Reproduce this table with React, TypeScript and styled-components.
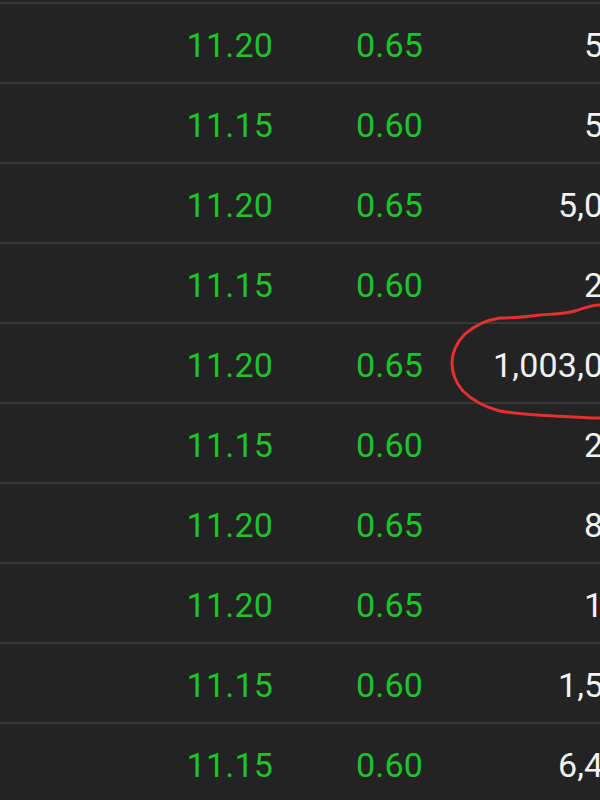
import React from "react";
import styled, { createGlobalStyle } from "styled-components";

const GlobalStyle = createGlobalStyle`
  html, body {
    margin: 0;
    padding: 0;
    background: #232323;
    overflow: hidden;
  }
  body {
    font-family: Roboto, "Liberation Sans", Arial, sans-serif;
  }
`;

const Screen = styled.div`
  position: relative;
  width: 600px;
  height: 800px;
  overflow: hidden;
  background: #232323;
  padding-top: 2px;
  box-sizing: border-box;
`;

const Table = styled.div`
  width: 680px;
  display: flex;
  flex-direction: column;
`;

const Row = styled.div`
  display: grid;
  grid-template-columns: 273px 150px 219px;
  align-items: center;
  height: 80px;
  box-sizing: border-box;
  border-top: 2px solid #383838;
  padding-top: 3px;
`;

const Cell = styled.div<{ $tone: "up" | "plain" }>`
  text-align: right;
  font-size: 34px;
  line-height: 1;
  letter-spacing: 0.2px;
  color: ${(p) => (p.$tone === "up" ? "#1ec22a" : "#f2f2f2")};
`;

const Mark = styled.svg`
  position: absolute;
  left: 0;
  top: 0;
  pointer-events: none;
`;

const rows = [
  { price: "11.20", change: "0.65", vol: "500" },
  { price: "11.15", change: "0.60", vol: "500" },
  { price: "11.20", change: "0.65", vol: "5,000" },
  { price: "11.15", change: "0.60", vol: "200" },
  { price: "11.20", change: "0.65", vol: "1,003,000" },
  { price: "11.15", change: "0.60", vol: "200" },
  { price: "11.20", change: "0.65", vol: "800" },
  { price: "11.20", change: "0.65", vol: "100" },
  { price: "11.15", change: "0.60", vol: "1,500" },
  { price: "11.15", change: "0.60", vol: "6,400" },
];

export default function App() {
  return (
    <>
      <GlobalStyle />
      <Screen>
        <Table>
          {rows.map((r, i) => (
            <Row key={i}>
              <Cell $tone="up">{r.price}</Cell>
              <Cell $tone="up">{r.change}</Cell>
              <Cell $tone="plain">{r.vol}</Cell>
            </Row>
          ))}
        </Table>
        <Mark width="600" height="800" viewBox="0 0 600 800">
          <path
            d="M602 305 C592 304 585 308 575 311 C565 314 552 314 540 315 C525 317 512 318 500 318 C487 320 475 325 465 334 C457 342 452 352 452 363 C452 373 456 383 463 391 C472 400 484 407 500 411 C515 414 535 415 555 416 C575 417 590 418 602 418"
            fill="none"
            stroke="#e5302f"
            strokeWidth="3"
            strokeLinecap="round"
          />
        </Mark>
      </Screen>
    </>
  );
}
